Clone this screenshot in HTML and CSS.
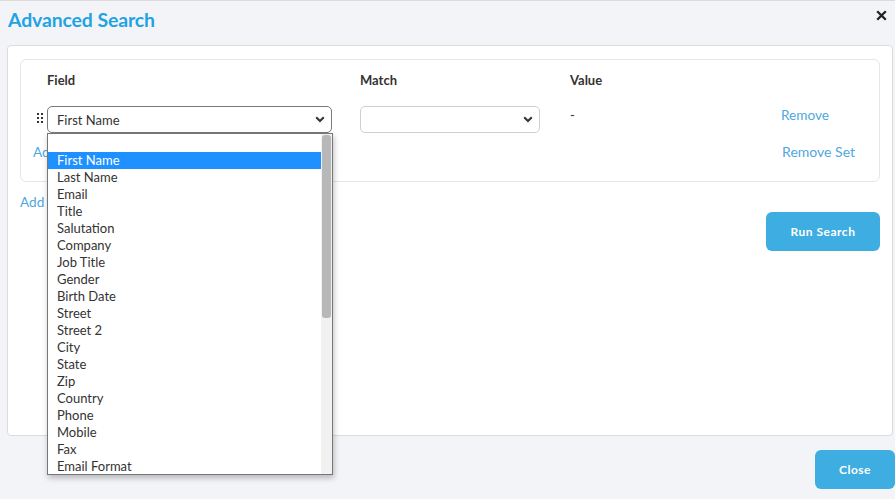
FILE: index.html
```html
<!DOCTYPE html>
<html>
<head>
<meta charset="utf-8">
<link rel="stylesheet" href="styles.css">
</head>
<body>
<div class="modal">
  <div class="modal-header">
    <h1 class="title">Advanced Search</h1>
    <svg class="close-x" width="11" height="11" viewBox="0 0 11 11"><path d="M1.2 1.2 L9.8 9.8 M9.8 1.2 L1.2 9.8" stroke="#222" stroke-width="2.3" stroke-linecap="butt"/></svg>
  </div>
  <div class="panel">
    <div class="card">
      <div class="row head">
        <span class="handle-sp"></span>
        <span class="col-field lbl">Field</span>
        <span class="col-match lbl">Match</span>
        <span class="col-value lbl">Value</span>
      </div>
      <div class="row rule">
        <svg class="handle" width="8" height="11" viewBox="0 0 8 11"><g fill="#333"><rect x="1" y="1" width="2" height="2"/><rect x="5" y="1" width="2" height="2"/><rect x="1" y="5" width="2" height="2"/><rect x="5" y="5" width="2" height="2"/><rect x="1" y="9" width="2" height="2"/><rect x="5" y="9" width="2" height="2"/></g></svg>
        <div class="col-field field-wrap">
          <div class="select focused"><span>First Name</span>
            <svg class="chev" width="10" height="7" viewBox="0 0 10 7"><path d="M1.2 1.3 L5 5 L8.8 1.3" fill="none" stroke="#333" stroke-width="2"/></svg>
          </div>
          <div class="dropdown">
            <ul class="opts">
              <li class="blank">&nbsp;</li>
              <li class="sel">First Name</li>
              <li>Last Name</li>
              <li>Email</li>
              <li>Title</li>
              <li>Salutation</li>
              <li>Company</li>
              <li>Job Title</li>
              <li>Gender</li>
              <li>Birth Date</li>
              <li>Street</li>
              <li>Street 2</li>
              <li>City</li>
              <li>State</li>
              <li>Zip</li>
              <li>Country</li>
              <li>Phone</li>
              <li>Mobile</li>
              <li>Fax</li>
              <li>Email Format</li>
            </ul>
            <div class="sbar"><div class="thumb"></div></div>
          </div>
        </div>
        <div class="col-match">
          <div class="select light"><span></span>
            <svg class="chev" width="10" height="7" viewBox="0 0 10 7"><path d="M1.2 1.3 L5 5 L8.8 1.3" fill="none" stroke="#333" stroke-width="2"/></svg>
          </div>
        </div>
        <span class="col-value dash">-</span>
        <a class="link remove">Remove</a>
      </div>
      <div class="row foot">
        <a class="link add-rule">Add Rule</a>
        <a class="link remove-set">Remove Set</a>
      </div>
    </div>
    <div class="actions">
      <a class="link add-set">Add Set</a>
      <button class="btn run">Run Search</button>
    </div>
  </div>
  <div class="modal-footer">
    <button class="btn close">Close</button>
  </div>
</div>
</body>
</html>
```
FILE: styles.css
```css
html, body { margin: 0; padding: 0; }
body {
  background: #f3f4f8;
  font-family: Lato, "Open Sans", sans-serif;
  color: #333;
  width: 895px;
  height: 499px;
  overflow: hidden;
}
.modal {
  border-top: 1px solid #dcdcdc;
  height: 498px;
  display: flex;
  flex-direction: column;
}
.modal-header {
  height: 44px;
  display: flex;
  align-items: flex-start;
  justify-content: space-between;
  padding: 0 8px 0 8px;
}
.title {
  margin: 7px 0 0 0;
  font-size: 19.4px;
  font-weight: 700;
  color: #1fa3e3;
  letter-spacing: -0.1px;
}
.close-x { margin-top: 9px; }
.panel {
  margin: 0 2px 0 7px;
  background: #fff;
  border: 1px solid #dcdcdc;
  border-radius: 4px;
  padding: 13px 12px 0 12px;
  box-sizing: border-box;
  height: 391px;
}
.card {
  border: 1px solid #e6e6e6;
  border-radius: 6px;
  height: 123px;
  box-sizing: border-box;
  padding: 0 0 0 15px;
}
.row { display: flex; align-items: flex-start; }
.head { height: 46px; padding-top: 12px; box-sizing: border-box; }
.lbl { font-size: 13px; font-weight: 700; color: #333; line-height: 16px; }
.handle-sp { width: 11px; }
.col-field { width: 285px; margin-right: 28px; }
.col-match { width: 180px; margin-right: 30px; }
.col-value { width: 211px; }
.rule { height: 36px; }
.handle { margin-top: 6px; width: 8px; margin-right: 3px; }
.field-wrap { position: relative; }
.select {
  height: 27px;
  box-sizing: border-box;
  border-radius: 5px;
  display: flex;
  align-items: center;
  justify-content: space-between;
  padding: 0 6px 0 9px;
  font-size: 13px;
  color: #333;
  background: #fff;
}
.select.focused { border: 1px solid #7a7a7a; }
.select.light { border: 1px solid #cfcfcf; }
.dash { font-size: 13px; line-height: 16px; margin-top: 1px; }
.link {
  color: #4fa7df;
  font-size: 13.6px;
  line-height: 16px;
  cursor: pointer;
}
.remove { margin-top: 1px; }
.remove-set { font-size: 14px; }
.foot { justify-content: space-between; padding-right: 24px; padding-top: 2px; }
.add-rule { margin-left: -3px; }
.actions {
  display: flex;
  justify-content: space-between;
  align-items: flex-start;
  margin-top: 12px;
}
.add-set { margin-left: 0; margin-top: 0; }
.btn {
  background: #3eade2;
  color: #fff;
  border: none;
  border-radius: 6px;
  font-family: Lato, sans-serif;
  font-weight: 700;
  font-size: 12px;
  letter-spacing: 0.5px;
}
.run { width: 114px; height: 39px; margin-top: 18px; }
.modal-footer {
  display: flex;
  justify-content: flex-end;
  padding-top: 14px;
}
.close { width: 80px; height: 39px; }
.dropdown {
  position: absolute;
  top: 27px;
  left: 0;
  width: 286px;
  height: 342px;
  box-sizing: border-box;
  border: 1px solid #767676;
  background: #fff;
  box-shadow: 1px 3px 6px rgba(0,0,0,0.25);
  display: flex;
  z-index: 5;
}
.opts {
  list-style: none;
  margin: 0;
  padding: 1px 0 0 0;
  flex: 1;
}
.opts li {
  height: 17px;
  line-height: 17px;
  font-size: 13px;
  padding-left: 9px;
  color: #333;
}
.opts li.sel { background: #1e90ff; color: #fff; }
.sbar {
  width: 11px;
  background: #f1f1f1;
  padding: 1px 1px 0 1px;
  box-sizing: border-box;
}
.thumb {
  height: 183px;
  background: #b8b8b8;
  border-radius: 3px;
}
```
